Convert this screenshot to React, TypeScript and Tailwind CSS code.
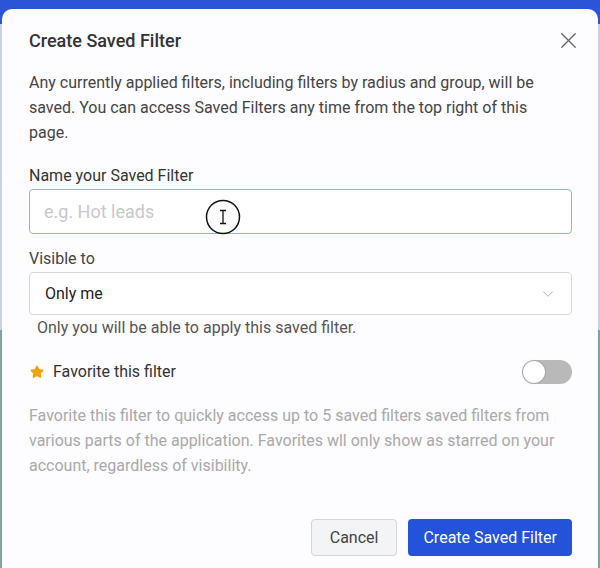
import React, { useState } from 'react';
import { X, ChevronDown, Star } from 'lucide-react';

export default function App() {
  const [favorite, setFavorite] = useState(false);

  return (
    <div
      className="relative h-[568px] w-[600px] overflow-hidden bg-[#7aa59e]"
      style={{ fontFamily: 'Roboto, "Noto Sans", sans-serif' }}
    >
      {/* page behind the dialog */}
      <div className="absolute inset-x-0 top-0 h-[330px] bg-[#c9cdee]" />
      <div className="absolute inset-x-0 top-0 h-[24px] bg-[#2a55d6]" />

      {/* Dialog */}
      <div className="absolute left-[2px] right-[2px] top-[9px] bottom-0 flex flex-col rounded-t-[10px] bg-[#fdfcff] pl-[27px] pr-[26px]">
        {/* Header */}
        <div className="flex items-center justify-between pt-[18px]">
          <h2 className="text-[18px] font-medium text-[#333]">Create Saved Filter</h2>
          <button className="-mr-[10px] text-[#666]">
            <X className="h-[27px] w-[27px]" strokeWidth={1.2} />
          </button>
        </div>

        <p className="mt-[16px] max-w-[520px] text-[16px] leading-[25px] text-[#444]">
          Any currently applied filters, including filters by radius and group, will be saved. You can access
          Saved Filters any time from the top right of this page.
        </p>

        {/* Name */}
        <label className="mt-[21px] block text-[16px] leading-[20px] text-[#333]">Name your Saved Filter</label>
        <input
          placeholder="e.g. Hot leads"
          className="mt-[3px] h-[45px] w-full rounded-[4px] border border-[#93b1ea] bg-white px-[14px] text-[18px] text-[#333] outline-none placeholder:text-[#c8c8c8]"
        />

        {/* Visible to */}
        <label className="mt-[15px] block text-[16px] leading-[20px] text-[#444]">Visible to</label>
        <div className="mt-[3px] flex h-[43px] w-full items-center justify-between rounded-[4px] border border-[#d6d6d6] bg-white pl-[15px] pr-[14px]">
          <span className="text-[16px] text-[#222]">Only me</span>
          <ChevronDown className="h-[18px] w-[18px] text-[#aaa]" strokeWidth={1.25} />
        </div>
        <p className="mt-[3px] pl-[8px] text-[16px] leading-[20px] text-[#555]">
          Only you will be able to apply this saved filter.
        </p>

        {/* Favorite */}
        <div className="mt-[22px] flex items-center justify-between">
          <div className="flex items-center gap-[9px] pl-[1px]">
            <Star className="h-[14px] w-[14px] fill-[#f0a30a] text-[#f0a30a]" />
            <span className="text-[16px] text-[#333]">Favorite this filter</span>
          </div>
          <button
            onClick={() => setFavorite(!favorite)}
            className={`relative h-[24px] w-[50px] rounded-full ${favorite ? 'bg-[#2552db]' : 'bg-[#b9b9b9]'}`}
          >
            <span
              className={`absolute top-[1px] h-[22px] w-[22px] rounded-full bg-white shadow-[0_0_2px_rgba(0,0,0,0.35)] ${
                favorite ? 'left-[27px]' : 'left-[1px]'
              }`}
            />
          </button>
        </div>

        <p className="mt-[19px] text-[16px] leading-[25px] text-[#a9a9a9]">
          Favorite this filter to quickly access up to 5 saved filters saved filters from various parts of the
          application. Favorites wll only show as starred on your account, regardless of visibility.
        </p>

        {/* Footer */}
        <div className="mt-auto mb-[12px] flex justify-end gap-[11px]">
          <button className="h-[37px] rounded-[4px] border border-[#d3d5da] bg-[#f3f4f6] px-[18px] text-[16px] text-[#444]">
            Cancel
          </button>
          <button className="h-[37px] rounded-[4px] bg-[#2552db] px-[15px] text-[16px] text-white">
            Create Saved Filter
          </button>
        </div>
      </div>

      {/* recorded mouse cursor */}
      <svg className="pointer-events-none absolute left-[205px] top-[199px]" width="36" height="36" viewBox="0 0 36 36">
        <circle cx="18" cy="18" r="16.5" fill="none" stroke="#111" strokeWidth="1.5" />
        <path d="M15 11.5h6M18 11.5v13M15 24.5h6" stroke="#111" strokeWidth="1.3" fill="none" />
      </svg>
    </div>
  );
}
